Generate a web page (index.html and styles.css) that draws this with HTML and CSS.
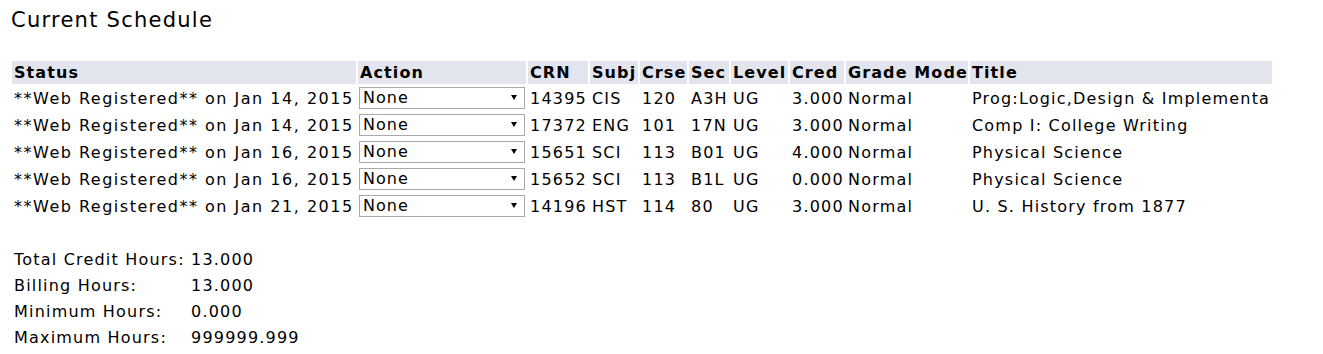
FILE: index.html
```html
<!DOCTYPE html>
<html>
<head>
<meta charset="utf-8">
<link rel="stylesheet" href="styles.css">
</head>
<body>
<h1 class="page-title">Current Schedule</h1>
<table class="sched">
  <colgroup>
    <col class="c-status"><col class="c-action"><col class="c-crn"><col class="c-subj"><col class="c-crse"><col class="c-sec"><col class="c-level"><col class="c-cred"><col class="c-gm"><col class="c-title">
  </colgroup>
  <thead>
    <tr>
      <th>Status</th><th>Action</th><th>CRN</th><th>Subj</th><th>Crse</th><th>Sec</th><th>Level</th><th>Cred</th><th>Grade Mode</th><th>Title</th>
    </tr>
  </thead>
  <tbody>
    <tr>
      <td class="st">**Web Registered** on Jan 14, 2015</td>
      <td class="act"><span class="sel"><select class="action"><option>None</option></select></span></td>
      <td>14395</td><td>CIS</td><td>120</td><td>A3H</td><td>UG</td><td>3.000</td><td>Normal</td><td class="ttl">Prog:Logic,Design &amp; Implementa</td>
    </tr>
    <tr>
      <td class="st">**Web Registered** on Jan 14, 2015</td>
      <td class="act"><span class="sel"><select class="action"><option>None</option></select></span></td>
      <td>17372</td><td>ENG</td><td>101</td><td>17N</td><td>UG</td><td>3.000</td><td>Normal</td><td class="ttl">Comp I: College Writing</td>
    </tr>
    <tr>
      <td class="st">**Web Registered** on Jan 16, 2015</td>
      <td class="act"><span class="sel"><select class="action"><option>None</option></select></span></td>
      <td>15651</td><td>SCI</td><td>113</td><td>B01</td><td>UG</td><td>4.000</td><td>Normal</td><td class="ttl">Physical Science</td>
    </tr>
    <tr>
      <td class="st">**Web Registered** on Jan 16, 2015</td>
      <td class="act"><span class="sel"><select class="action"><option>None</option></select></span></td>
      <td>15652</td><td>SCI</td><td>113</td><td>B1L</td><td>UG</td><td>0.000</td><td>Normal</td><td class="ttl">Physical Science</td>
    </tr>
    <tr>
      <td class="st">**Web Registered** on Jan 21, 2015</td>
      <td class="act"><span class="sel"><select class="action"><option>None</option></select></span></td>
      <td>14196</td><td>HST</td><td>114</td><td>80</td><td>UG</td><td>3.000</td><td>Normal</td><td class="ttl">U. S. History from 1877</td>
    </tr>
  </tbody>
</table>
<div class="totals">
  <div class="trow"><span class="tl">Total Credit Hours:</span><span class="tv">13.000</span></div>
  <div class="trow"><span class="tl">Billing Hours:</span><span class="tv">13.000</span></div>
  <div class="trow"><span class="tl">Minimum Hours:</span><span class="tv">0.000</span></div>
  <div class="trow"><span class="tl">Maximum Hours:</span><span class="tv">999999.999</span></div>
</div>
</body>
</html>
```
FILE: styles.css
```css
html, body {
  margin: 0;
  padding: 0;
  background: #fff;
  color: #000;
  font-family: "DejaVu Sans", Verdana, sans-serif;
  font-size: 16px;
  letter-spacing: 1.2px;
}
body {
  padding: 0 0 0 10px;
}
.page-title {
  font-weight: normal;
  font-size: 21px;
  letter-spacing: 1.25px;
  margin: 0;
  padding: 7px 0 0 1px;
  height: 44px;
  line-height: 26px;
}
.sched {
  border-collapse: separate;
  border-spacing: 2px 0;
  table-layout: fixed;
  width: 1264px;
  margin-top: 10px;
}
.c-status { width: 344px; }
.c-action { width: 168px; }
.c-crn { width: 60px; }
.c-subj { width: 48px; }
.c-crse { width: 47px; }
.c-sec { width: 40px; }
.c-level { width: 57px; }
.c-cred { width: 54px; }
.c-gm { width: 122px; }
.c-title { width: 302px; }
.sched th {
  background: #e3e5ee;
  text-align: left;
  font-weight: bold;
  letter-spacing: 1.1px;
  height: 23px;
  padding: 0 2px;
  vertical-align: middle;
  white-space: nowrap;
  overflow: hidden;
}
.sched td {
  height: 25px;
  padding: 2px 2px 0;
  vertical-align: middle;
  white-space: nowrap;
  overflow: hidden;
}
.sched td.st {
  letter-spacing: 1.5px;
}
.sched td.act {
  height: 27px;
  padding: 0 1px;
}
.sel {
  position: relative;
  display: block;
  width: 166px;
  height: 22px;
}
.sel::after {
  content: "";
  position: absolute;
  right: 8px;
  top: 8px;
  border-left: 3px solid transparent;
  border-right: 3px solid transparent;
  border-top: 5px solid #000;
  pointer-events: none;
}
.action {
  -webkit-appearance: none;
  appearance: none;
  width: 166px;
  height: 22px;
  font-family: "DejaVu Sans", Verdana, sans-serif;
  font-size: 16px;
  letter-spacing: 1px;
  border: 1px solid #a9a9a9;
  border-radius: 0;
  background: #fff;
  color: #000;
  padding: 0 0 0 3px;
  margin: 0;
  display: block;
}
.totals {
  margin-top: 28px;
  padding-left: 4px;
}
.trow {
  display: flex;
  height: 26px;
  line-height: 26px;
}
.tl {
  width: 177px;
}
```
